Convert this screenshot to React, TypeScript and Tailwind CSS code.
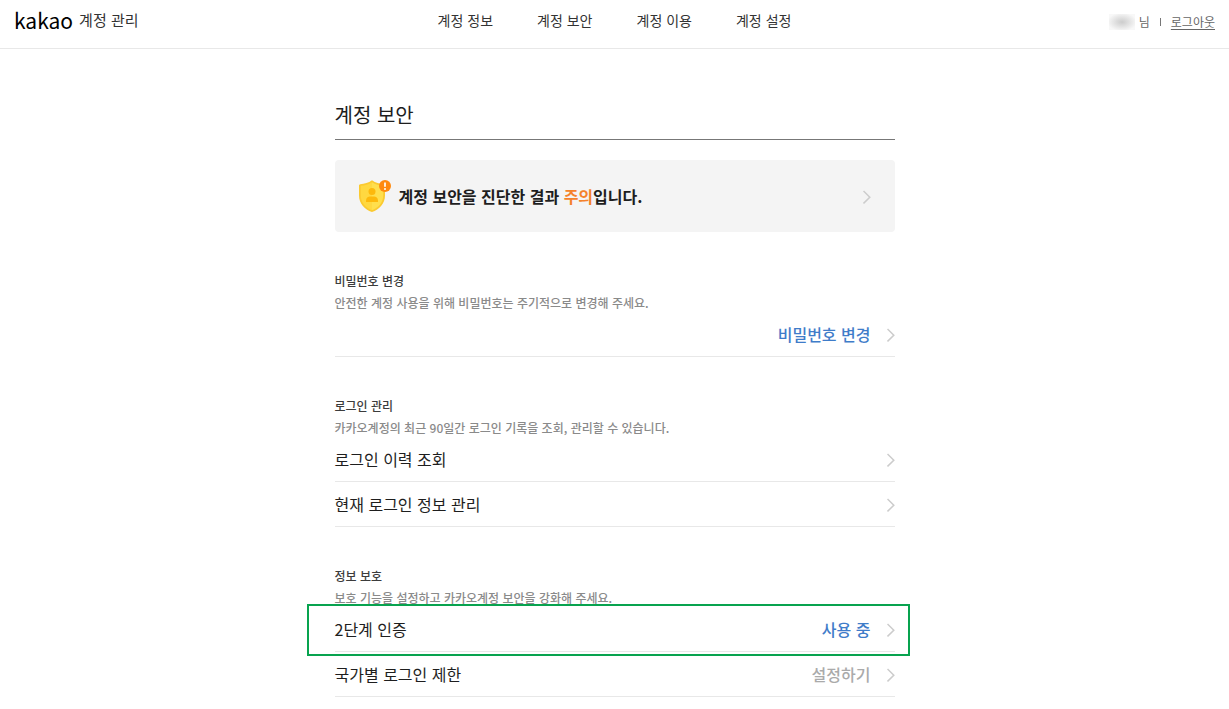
import React from 'react';

interface RowItem {
  label?: string;
  value?: string;
  valueClass?: string;
  highlighted?: boolean;
}

interface SectionData {
  title: string;
  description: string;
  rows: RowItem[];
}

const navItems = ['계정 정보', '계정 보안', '계정 이용', '계정 설정'];

const sections: SectionData[] = [
  {
    title: '비밀번호 변경',
    description: '안전한 계정 사용을 위해 비밀번호는 주기적으로 변경해 주세요.',
    rows: [{ value: '비밀번호 변경', valueClass: 'text-[#3f7cc9]' }],
  },
  {
    title: '로그인 관리',
    description: '카카오계정의 최근 90일간 로그인 기록을 조회, 관리할 수 있습니다.',
    rows: [{ label: '로그인 이력 조회' }, { label: '현재 로그인 정보 관리' }],
  },
  {
    title: '정보 보호',
    description: '보호 기능을 설정하고 카카오계정 보안을 강화해 주세요.',
    rows: [
      { label: '2단계 인증', value: '사용 중', valueClass: 'text-[#3f7cc9]', highlighted: true },
      { label: '국가별 로그인 제한', value: '설정하기', valueClass: 'text-[#aaaaaa]' },
    ],
  },
];

const Chevron: React.FC = () => (
  <svg className="h-4 w-2 shrink-0" viewBox="0 0 8 16" fill="none" aria-hidden="true">
    <path d="M0.5 3L6.8 9.2L0.5 15.4" stroke="#cccccc" strokeWidth="1.5" />
  </svg>
);

const ShieldIcon: React.FC = () => (
  <svg className="h-8 w-8 shrink-0" viewBox="0 0 32 32" aria-hidden="true">
    <path
      d="M13 0.3C9.5 2.8 5.5 4 1.2 4.2C0.5 4.3 0 4.8 0 5.5V15.5C0 23.5 5.5 29.5 13 32C20.5 29.5 26 23.5 26 15.5V5.5C26 4.8 25.5 4.3 24.8 4.2C20.5 4 16.5 2.8 13 0.3Z"
      fill="#fbca30"
    />
    <path d="M13 2.2C9.6 4.4 6 5.5 1.8 5.8V15.5C1.8 22.4 6.4 27.8 13 30.2V2.2Z" fill="#ffd840" />
    <path d="M13 2.2C16.4 4.4 20 5.5 24.2 5.8V15.5C24.2 22.4 19.6 27.8 13 30.2V2.2Z" fill="#ffdf4d" />
    <circle cx="13" cy="11.5" r="3.5" fill="#fdb90c" />
    <path d="M7 22V20.5C7 17.7 9 16.5 11 16.5H15C17 16.5 19 17.7 19 20.5V22Z" fill="#fdb90c" />
    <circle cx="26" cy="6" r="6" fill="#ff8a0f" />
    <path d="M26 2.5V6.8" stroke="#fff" strokeWidth="1.7" />
    <circle cx="26" cy="8.9" r="1" fill="#fff" />
  </svg>
);

const Row: React.FC<{ row: RowItem }> = ({ row }) => (
  <li className="relative border-b border-[#e8e8e8]">
    <a href="#" className="flex h-11 items-center text-base">
      {row.label && <span className="text-[#1e1e1e]">{row.label}</span>}
      {row.value && <span className={`ml-auto font-medium ${row.valueClass}`}>{row.value}</span>}
      <span className={row.value ? 'ml-4' : 'ml-auto'}>
        <Chevron />
      </span>
    </a>
    {row.highlighted && (
      <div className="pointer-events-none absolute -top-[3px] -right-[15px] -bottom-[5px] -left-7 border-2 border-[#08a34f]" />
    )}
  </li>
);

const Section: React.FC<{ section: SectionData }> = ({ section }) => (
  <section className="mt-10">
    <h2 className="text-xs leading-[18px] font-medium text-[#3c3c3c]">{section.title}</h2>
    <p className="mt-1 text-xs leading-[18px] font-medium text-[#8a8a8a]">{section.description}</p>
    <ul>
      {section.rows.map((row, i) => (
        <Row key={i} row={row} />
      ))}
    </ul>
  </section>
);

const Header: React.FC = () => (
  <header className="grid h-[49px] grid-cols-[1fr_auto_1fr] items-start border-b border-[#e8e8e8] px-[14px]">
    <a href="#" className="flex h-10 items-center gap-[6px]">
      <span className="text-[21px] leading-6 text-black">kakao</span>
      <span className="text-[15px] leading-6 text-[#333333]">계정 관리</span>
    </a>
    <nav className="flex h-10 items-center gap-11">
      {navItems.map((item) => (
        <a key={item} href="#" className="text-sm text-[#333333]">
          {item}
        </a>
      ))}
    </nav>
    <div className="flex h-11 items-center justify-self-end text-xs text-[#666666]">
      <span className="mr-1 h-4 w-[26px] bg-radial from-[#cccccc] to-[#f8f8f8] to-80%" />
      <span>님</span>
      <span className="mx-[10px] h-2 w-px bg-[#777777]" />
      <a href="#" className="underline underline-offset-2">
        로그아웃
      </a>
    </div>
  </header>
);

const App: React.FC = () => {
  return (
    <div className="bg-white font-['Noto_Sans_CJK_KR',sans-serif]" lang="ko">
      <Header />
      <main className="mx-auto max-w-[560px] pt-[52px] pb-3">
        <h1 className="border-b border-[#777777] pb-[10px] text-xl leading-7 text-[#1e1e1e]">계정 보안</h1>
        <a href="#" className="mt-5 flex h-[72px] items-center rounded bg-[#f4f4f4] px-6">
          <ShieldIcon />
          <span className="ml-2 text-base font-bold text-[#1e1e1e]">
            계정 보안을 진단한 결과 <em className="text-[#f5822b] not-italic">주의</em>입니다.
          </span>
          <span className="ml-auto">
            <Chevron />
          </span>
        </a>
        {sections.map((section) => (
          <Section key={section.title} section={section} />
        ))}
      </main>
    </div>
  );
};

export default App;
